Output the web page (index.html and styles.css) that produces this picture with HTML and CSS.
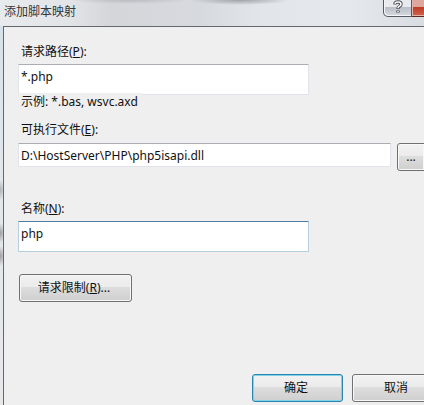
FILE: index.html
```html
<!DOCTYPE html>
<html lang="zh-CN">
<head>
<meta charset="utf-8">
<title>添加脚本映射</title>
<link rel="stylesheet" href="styles.css">
</head>
<body>
<div class="window">
  <header class="titlebar">
    <h1 class="title">添加脚本映射</h1>
    <div class="caption-buttons">
      <button class="caption help" type="button" aria-label="帮助">
        <svg width="10" height="14" viewBox="0 0 10 14" aria-hidden="true">
          <path d="M2 4.6V4Q2 2 5 2T8 4.2Q8 5.4 6.5 6.2Q5 7 5 8.8M5 10.4V12.6" fill="none" stroke="#4c5058" stroke-width="3.4"/>
          <path d="M2 3.8Q2 2 5 2T8 4.2Q8 5.4 6.5 6.2Q5 7 5 8M5 11V12" fill="none" stroke="#fff" stroke-width="1.5"/>
        </svg>
      </button>
      <button class="caption close" type="button" aria-label="关闭"></button>
    </div>
  </header>
  <form class="client">
    <div class="group path">
      <label for="path">请求路径(<u>P</u>):</label>
      <input class="field tall" id="path" type="text" value="*.php">
      <p class="hint">示例: *.bas, wsvc.axd</p>
    </div>
    <div class="group exe">
      <label for="exe">可执行文件(<u>E</u>):</label>
      <div class="row">
        <input class="field" id="exe" type="text" value="D:\HostServer\PHP\php5isapi.dll">
        <button class="button browse" type="button">...</button>
      </div>
    </div>
    <div class="group name">
      <label for="name">名称(<u>N</u>):</label>
      <input class="field tall active" id="name" type="text" value="php">
    </div>
    <button class="button limits" type="button">请求限制(<u>R</u>)...</button>
    <div class="actions">
      <button class="button primary" type="submit">确定</button>
      <button class="button" type="button">取消</button>
    </div>
  </form>
</div>
</body>
</html>
```
FILE: styles.css
```css
* { box-sizing: border-box; }

body {
  margin: 0;
  font: 12px/16px "Noto Sans", "Noto Sans CJK SC", sans-serif;
  color: #111;
}

.window {
  display: flex;
  flex-direction: column;
  min-height: 100vh;
  padding-left: 3px;
  overflow: hidden;
  background:
    radial-gradient(ellipse 6px 10px at 0 256px, #9b9da0, transparent),
    radial-gradient(ellipse 6px 10px at 0 233px, #9b9da0, transparent),
    radial-gradient(ellipse 6px 10px at 0 190px, #b0b3b6, transparent),
    linear-gradient(#d3e0e9, #dce6ee 120px, #e4e7ea 200px, #e6e8ea);
}

.titlebar {
  display: flex;
  justify-content: space-between;
  height: 26px;
  margin-left: -3px;
  padding-left: 4px;
  background:
    radial-gradient(ellipse 50px 5px at 240px 0, #9fa2a8, transparent),
    radial-gradient(ellipse 60px 4px at 130px 0, #b9bcc1, transparent),
    linear-gradient(90deg, #e8ebee, #e2e4e7 70px, #d4d6da 110px, #d6d9de 200px, #e2e6ea 260px, #e5e9ed 350px, #d9dce1);
}

.title {
  margin: 4px 0 0;
  font-size: 12px;
  font-weight: 400;
  color: #33363b;
}

.caption-buttons {
  display: flex;
  height: 17px;
  margin-right: -24px;
}

.caption {
  display: flex;
  justify-content: center;
  align-items: flex-start;
  margin: 0;
  padding: 0;
  border: 1px solid #555a63;
  border-top: 0;
}

.help {
  width: 29px;
  border-radius: 0 0 0 5px;
  background: linear-gradient(#e8eaee 45%, #b9bec7 45%, #d6dae0);
  box-shadow: inset 1px -1px #f3f5f7;
}

.close {
  width: 36px;
  border-left: 0;
  border-color: #5b2820;
  background: linear-gradient(#dda79d 45%, #bd3b27 45%, #d0644d);
  box-shadow: inset 1px -1px #e4b3a9;
}

.client {
  flex: 1;
  display: flex;
  flex-direction: column;
  align-items: flex-start;
  padding: 17px 0 3px 14px;
  border-top: 1px solid #65676c;
  border-left: 1px solid #65676c;
  background: #efefef;
}

.group {
  display: flex;
  flex-direction: column;
  align-items: flex-start;
  width: 100%;
}

.group label {
  margin-bottom: 4px;
  padding-left: 3px;
}

.exe { margin-top: 12px; }
.exe label { margin-bottom: 5px; }
.name { margin-top: 30px; }

.field {
  flex: 1;
  min-width: 0;
  height: 24px;
  margin: 0;
  padding: 0 2px;
  border: 1px solid #e2e3ea;
  border-top-color: #abadb3;
  border-radius: 1px;
  outline: 0;
  background: #fff;
  font: inherit;
  color: inherit;
}

.tall {
  flex: none;
  width: calc(100% - 115px);
  height: 31px;
  padding-bottom: 7px;
}

.active {
  border-color: #b5cfe0;
  border-top-color: #4e7ca5;
}

.hint {
  position: relative;
  margin: -2px 0 0;
  padding: 1px 4px 0 3px;
  background: #efefef;
}

.row {
  display: flex;
  gap: 6px;
  width: calc(100% + 1px);
  align-items: flex-start;
}

.button {
  width: 91px;
  height: 28px;
  margin: 0;
  padding: 0 3px 0 0;
  border: 1px solid #707070;
  border-radius: 3px;
  background: linear-gradient(#f2f2f2, #ebebeb 48%, #dddddd 48%, #cfcfcf);
  box-shadow: inset 0 0 0 1px #f8f8f8;
  font: inherit;
  color: inherit;
}

.browse {
  width: 28px;
  padding: 0;
  border-radius: 3px 0 0 3px;
}

.limits {
  width: 113px;
  margin: 22px 0 0 1px;
}

.primary {
  border-color: #2c84ac;
  box-shadow: inset 0 0 0 1px #7fd3ee;
}

.actions {
  display: flex;
  gap: 9px;
  align-self: flex-end;
  margin-top: auto;
  margin-right: -19px;
}
```
